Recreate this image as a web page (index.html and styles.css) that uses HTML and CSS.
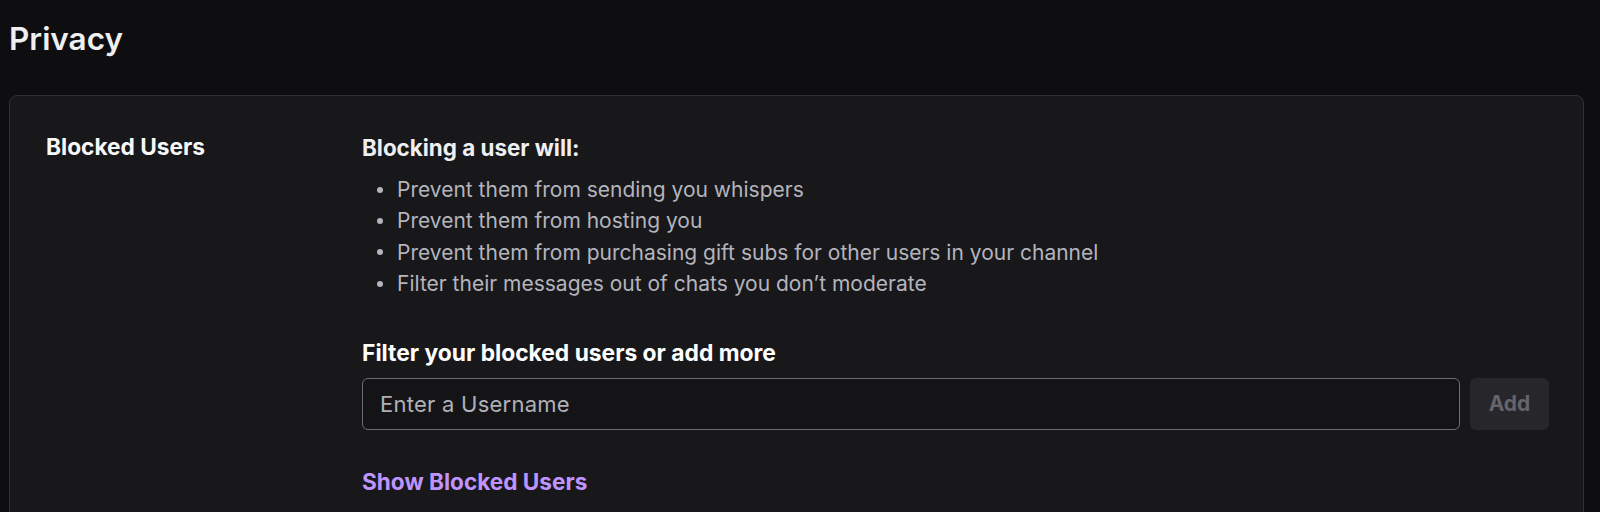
FILE: index.html
```html
<!DOCTYPE html>
<html lang="en">
<head>
<meta charset="utf-8">
<title>Privacy</title>
<link rel="stylesheet" href="styles.css">
</head>
<body>
<main class="page">
  <h1 class="title">Privacy</h1>
  <section class="card">
    <div class="row">
      <div class="label">Blocked Users</div>
      <div class="content">
        <h2 class="heading">Blocking a user will:</h2>
        <ul class="list">
          <li>Prevent them from sending you whispers</li>
          <li>Prevent them from hosting you</li>
          <li>Prevent them from purchasing gift subs for other users in your channel</li>
          <li>Filter their messages out of chats you don’t moderate</li>
        </ul>
        <h2 class="heading filter-label">Filter your blocked users or add more</h2>
        <div class="input-row">
          <div class="input"><span class="placeholder">Enter a Username</span></div>
          <button class="add-btn" disabled>Add</button>
        </div>
        <a class="link" href="#">Show Blocked Users</a>
      </div>
    </div>
  </section>
</main>
</body>
</html>
```

FILE: styles.css
```css
* { box-sizing: border-box; }
html, body {
  margin: 0;
  background: #0e0e10;
  height: 100%;
  overflow: hidden;
}
body {
  font-family: Inter, "Noto Sans", "Liberation Sans", sans-serif;
  color: #efeff1;
}
.page {
  padding: 20px 16px 0 9px;
}
.title {
  margin: 0 0 37px 0;
  font-size: 31.5px;
  line-height: 38px;
  font-weight: 600;
  color: #efeff1;
}
.card {
  background: #18181b;
  border: 1px solid #303034;
  border-radius: 8px;
  padding: 36px 34px 60px 36px;
}
.row {
  display: grid;
  grid-template-columns: 316px 1fr;
}
.label {
  font-size: 22.7px;
  font-weight: 700;
  line-height: 30px;
  color: #f7f7f8;
}
.heading {
  margin: 0;
  font-size: 22.4px;
  font-weight: 700;
  line-height: 32px;
  color: #efeff1;
}
.list {
  list-style: none;
  margin: 10px 0 0 0;
  padding: 0 0 0 15px;
}
.list li {
  display: flex;
  align-items: center;
  gap: 14px;
  font-size: 21px;
  line-height: 31.3px;
  color: #b4b4bd;
}
.list li::before {
  content: "";
  width: 6px;
  height: 6px;
  border-radius: 50%;
  background: #b4b4bd;
  flex: none;
}
.filter-label {
  margin-top: 38.5px;
  font-size: 22.8px;
  line-height: 30px;
  color: #ffffff;
}
.input-row {
  display: flex;
  gap: 10px;
  margin-top: 10px;
}
.input {
  flex: 1;
  height: 52px;
  border: 1.5px solid #6c6c72;
  border-radius: 6px;
  background: #141417;
  display: flex;
  align-items: center;
  padding: 0 17px;
}
.placeholder {
  font-size: 22px;
  letter-spacing: 0.25px;
  color: #b0b0b8;
}
.add-btn {
  width: 79px;
  height: 52px;
  border: none;
  border-radius: 6px;
  background: #26262b;
  color: #64646b;
  font-family: inherit;
  font-size: 21px;
  font-weight: 700;
}
.link {
  display: block;
  margin-top: 37.5px;
  font-size: 22.6px;
  font-weight: 700;
  line-height: 30px;
  color: #bf94ff;
  text-decoration: none;
}
```
